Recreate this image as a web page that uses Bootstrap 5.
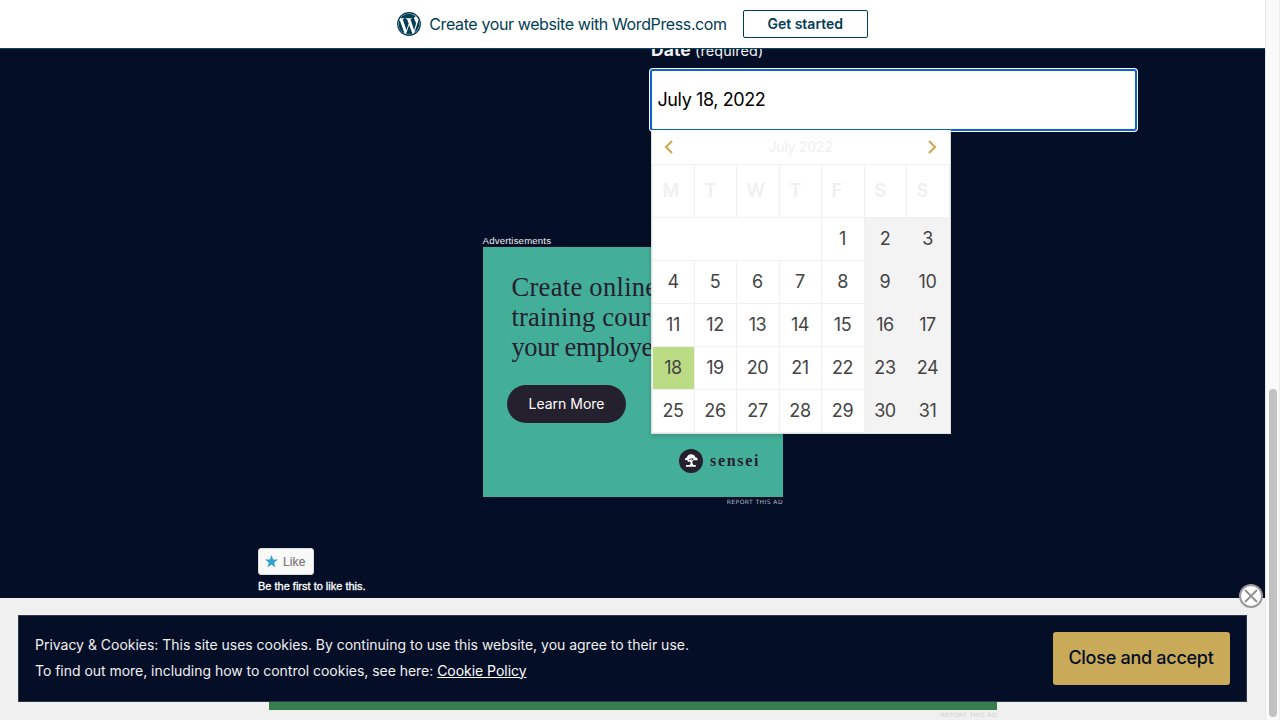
<!DOCTYPE html>
<html lang="en">
<head>
<meta charset="utf-8">
<meta name="viewport" content="width=device-width, initial-scale=1">
<title>Create your website with WordPress.com</title>
<link href="https://cdn.jsdelivr.net/npm/bootstrap@5.3.0/dist/css/bootstrap.min.css" rel="stylesheet">
<style>
html,body{height:100%;overflow:hidden}
body{font-family:Inter,"Liberation Sans",sans-serif;background:#040e27;color:#f0f0f0}
svg{display:block;flex:none}
.topbar{height:49px;border-bottom:1px solid #00485c;color:#023d54;z-index:5}
.topbar .slogan{font-size:16px;letter-spacing:-.385px;margin-left:8px;line-height:24px}
.start-btn{width:125px;height:28px;border:1px solid #023d54;border-radius:2px;color:#023d54;font-size:14px;font-weight:600;padding:0;line-height:26px;margin-left:16px}
.content-area{height:549px;overflow:hidden}
.date-field{width:486px;margin-left:651px}
.date-label{height:21px;font-size:17.5px;font-weight:700;line-height:24px;margin-top:-11px;margin-bottom:11px;white-space:nowrap;letter-spacing:.1px}
.date-label small{font-size:14.4px;font-weight:400}
.date-input{height:60px;width:485px;border:0;border-radius:2px;outline:2px solid #0b63ce;outline-offset:-1px;box-shadow:0 0 0 2px #fff;padding:0 7px 1px 6.5px;font-size:18px;color:#000;letter-spacing:-.4px;display:block}
.calendar{left:0;top:60px;width:300px;height:304px;background:#fff;border:1px solid #dfdfdf;border-top-color:#fff;z-index:3;box-shadow:0 2px 5px rgba(0,0,0,.18)}
.month-bar{height:33px;padding:0 13px 2px 12px;font-size:14px;color:#f0f0f0;letter-spacing:-.2px}
.days{display:grid;grid-template-columns:42px 42px 43px 42px 43px 42px 1fr;grid-template-rows:53px repeat(5,43px);border-left:1px solid #f0f0f0;border-top:1px solid #f0f0f0;font-size:18px;color:#444}
.days>div{border-right:1px solid #f0f0f0;border-bottom:1px solid #f0f0f0;display:flex;align-items:center;justify-content:center;letter-spacing:-.4px;padding:0 1px 2px 0}
.days>.dow{justify-content:flex-start;padding-left:9.5px;font-weight:600;color:#f0f0f0}
.days>.blank{grid-column:span 4}
.days>.off{background:#f3f3f3;border-color:#f3f3f3}
.days>.picked{background:#bbdc85}
.promo-wrap{width:300px;margin-left:483px;margin-top:105px}
.promo-label{font:9.6px/12px "Liberation Sans",sans-serif;letter-spacing:.17px;height:12px;margin-left:-.4px}
.promo{height:250px;background:#44af99;color:#25202e;padding:25px 24px 0}
.promo h2{font:26.5px/30px "Liberation Serif",serif;margin:0 0 0 4.5px;letter-spacing:.3px;white-space:nowrap;height:90px;width:140px}
.promo h2 .l2{letter-spacing:.2px}
.promo h2 .l3{letter-spacing:-.42px}
.learn{display:block;width:119px;height:38px;border-radius:19px;background:#25202e;color:#fff;font-size:14px;line-height:38px;margin-top:23px;text-align:center}
.brand-line{margin-top:26px;gap:7px}
.brand-line span{font:bold 16px/24px "Liberation Serif",serif;letter-spacing:1.65px;margin-right:-1px}
.report{font:6px/10px "DejaVu Sans","Liberation Sans",sans-serif;text-align:right;color:#b4b9c2;letter-spacing:.45px}
.likes{margin:41px 0 0 258px}
.like-btn{width:56px;height:27px;background:#f9f9f9;border:1px solid #ddd;border-radius:3px;color:#777;font:12px/25px "Liberation Sans",sans-serif;padding:1px 0 0 6px;gap:5px;letter-spacing:.1px;-webkit-text-stroke:.2px #777}
.like-btn svg{margin-top:-2px}
.first-like{font:11px/16px "Liberation Sans",sans-serif;color:#fff;margin-top:3px;letter-spacing:0;-webkit-text-stroke:.3px #fff}
.bottom-ad{height:122px;background:#f0f0f0;padding:17px 18px 0}
.cookie{height:87px;background:#040e27;border:1px solid #303848;padding:0 16px;font-size:14px;line-height:26px}
.cookie-text{padding-bottom:2px;letter-spacing:-.015px}
.cookie-text .more{letter-spacing:-.03px}
.cookie a{color:#fff}
.accept{width:177px;height:53px;background:#c9aa59;color:#040e27;border-radius:3px;border:0;font-size:18px;font-weight:500;letter-spacing:-.27px;white-space:nowrap;padding:0 1px 2px 0}
.green-strip{width:728px;height:8px;background:#367e4c;margin-left:251px}
.bottom-ad .report{width:728px;margin-left:251px;color:#cfcfcf}
.close-ad{right:2px;top:-14px;z-index:4}
.scroll-track{width:15px;background:#fafafa;border-left:1px solid #e7e7e7;border-right:1px solid #eee;padding:389px 2px 0 3px}
.scroll-thumb{height:328px;width:8px;border-radius:4px;background:#c1c1c1}
</style>
</head>
<body>
<div class="d-flex vh-100">
<div class="flex-grow-1 d-flex flex-column">
 <header class="topbar bg-white d-flex align-items-center justify-content-center position-relative flex-shrink-0">
  <svg width="24" height="24" viewBox="0 0 16 16" fill="#023d54"><circle cx="8" cy="8" r="7.5" fill="none" stroke="#023d54" stroke-width=".85"/><path d="M12.633 7.653c0-.848-.305-1.435-.566-1.892l-.08-.13c-.317-.51-.594-.958-.594-1.48 0-.63.478-1.218 1.152-1.218q.03 0 .058.003l.031.003A6.84 6.84 0 0 0 8 1.137 6.86 6.86 0 0 0 2.266 4.23c.16.005.313.009.442.009.717 0 1.828-.087 1.828-.087.37-.022.414.521.044.565 0 0-.371.044-.785.065l2.5 7.434 1.5-4.506-1.07-2.929c-.369-.022-.719-.065-.719-.065-.37-.022-.326-.588.043-.566 0 0 1.134.087 1.808.087.718 0 1.83-.087 1.83-.087.37-.022.413.522.043.566 0 0-.372.043-.785.065l2.48 7.377.684-2.287.054-.173c.27-.86.469-1.495.469-2.046zM1.137 8a6.86 6.86 0 0 0 3.868 6.176L1.73 5.206A6.8 6.8 0 0 0 1.137 8M6.061 14.583 8.121 8.6l2.109 5.78q.02.05.049.094a6.85 6.85 0 0 1-4.218.109m7.96-9.876q.046.328.047.706c0 .696-.13 1.479-.522 2.458l-2.096 6.06a6.86 6.86 0 0 0 2.572-9.224z"/></svg>
  <span class="slogan">Create your website with WordPress.com</span>
  <button class="btn start-btn">Get started</button>
 </header>
 <main class="content-area flex-shrink-0">
  <div class="date-field position-relative">
   <label class="date-label d-block" for="date">Date <small>(required)</small></label>
   <div class="position-relative">
    <input id="date" class="date-input" value="July 18, 2022">
    <div class="calendar position-absolute">
     <div class="month-bar d-flex align-items-center justify-content-between">
      <svg width="10" height="16" viewBox="0 0 10 16" fill="none" stroke="#c9aa59" stroke-width="2.200"><path d="M8 2 2 8l6 6"/></svg>
      <span>July 2022</span>
      <svg width="10" height="16" viewBox="0 0 10 16" fill="none" stroke="#c9aa59" stroke-width="2.200"><path d="m2 2 6 6-6 6"/></svg>
     </div>
     <div class="days">
      <div class="dow">M</div><div class="dow">T</div><div class="dow">W</div><div class="dow">T</div><div class="dow">F</div><div class="dow">S</div><div class="dow">S</div>
      <div class="blank"></div><div>1</div><div class="off">2</div><div class="off">3</div>
      <div>4</div><div>5</div><div>6</div><div>7</div><div>8</div><div class="off">9</div><div class="off">10</div>
      <div>11</div><div>12</div><div>13</div><div>14</div><div>15</div><div class="off">16</div><div class="off">17</div>
      <div class="picked">18</div><div>19</div><div>20</div><div>21</div><div>22</div><div class="off">23</div><div class="off">24</div>
      <div>25</div><div>26</div><div>27</div><div>28</div><div>29</div><div class="off">30</div><div class="off">31</div>
     </div>
    </div>
   </div>
  </div>
  <section class="promo-wrap">
   <div class="promo-label">Advertisements</div>
   <div class="promo">
    <h2>Create online<br><span class="l2">training cour</span><br><span class="l3">your employe</span></h2>
    <span class="learn">Learn More</span>
    <div class="brand-line d-flex justify-content-end align-items-center">
     <svg width="24" height="24" viewBox="0 0 24 24"><circle cx="12" cy="12" r="12" fill="#25202e"/><path fill="#fff" d="M6 11c-.5-1.4.8-2.2 2-2.5C8 6.600 9.800 5.300 12 5.300c2.500 0 3.900 1.200 4.300 2.900 1.700.2 2.700 1.500 2.200 3.100h-4.200l-.8 1.500c-.4 1.300.2 2.400 1 3.200h2.300v1.800H7v-1.800h3.700c1-.9 1.100-1.900.7-3.200H9.200L8 11.100z"/><path d="M10 10.800l2.300-1 2 .2-1.800 1.700" fill="none" stroke="#25202e" stroke-width=".9"/></svg>
     <span>sensei</span>
    </div>
   </div>
   <div class="report">REPORT THIS AD</div>
  </section>
  <section class="likes">
   <div class="like-btn d-flex align-items-center"><svg width="13" height="13" viewBox="0 0 24 24" fill="#2ea2cc"><path d="m12 0 3 8.500h9l-7.200 5.500 2.700 9L12 17.600 4.500 23l2.700-9L0 8.500h9z"/></svg>Like</div>
   <div class="first-like">Be the first to like this.</div>
  </section>
 </main>
 <footer class="bottom-ad position-relative flex-shrink-0">
  <svg class="close-ad position-absolute" width="24" height="24" viewBox="0 0 24 24"><circle cx="12" cy="12" r="11" fill="#fff" stroke="#999" stroke-width="2"/><path d="m6 6 12 12M18 6 6 18" stroke="#8f8f8f" stroke-width="1.800"/></svg>
  <div class="cookie d-flex align-items-center justify-content-between">
   <div class="cookie-text">Privacy &amp; Cookies: This site uses cookies. By continuing to use this website, you agree to their use.<br><span class="more">To find out more, including how to control cookies, see here: <a href="#">Cookie Policy</a></span></div>
   <button class="btn accept">Close and accept</button>
  </div>
  <div class="green-strip"></div>
  <div class="report">REPORT THIS AD</div>
 </footer>
</div>
<div class="scroll-track flex-shrink-0"><div class="scroll-thumb"></div></div>
</div>
<script src="https://cdn.jsdelivr.net/npm/bootstrap@5.3.0/dist/js/bootstrap.bundle.min.js"></script>
</body>
</html>
